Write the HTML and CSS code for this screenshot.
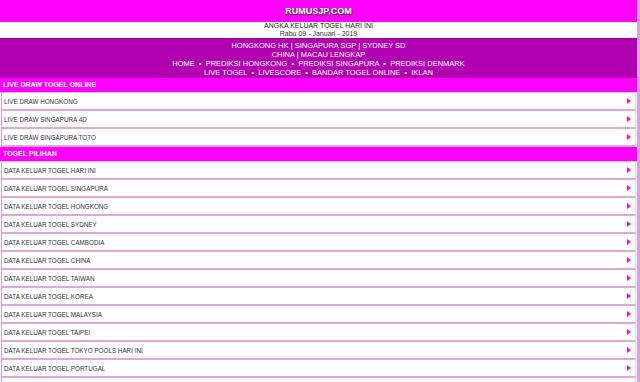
FILE: index.html
```html
<!DOCTYPE html>
<html>
<head>
<meta charset="utf-8">
<link rel="stylesheet" href="styles.css">
</head>
<body>
<div class="page">
  <header class="top">RUMUSJP.COM</header>
  <div class="sub">
    <div class="sub-title">ANGKA KELUAR TOGEL HARI INI</div>
    <div class="sub-date">Rabu 09 - Januari - 2019</div>
  </div>
  <nav class="nav">
    <div>HONGKONG HK | SINGAPURA SGP | SYDNEY SD</div>
    <div>CHINA | MACAU LENGKAP</div>
    <div>HOME &nbsp;•&nbsp; PREDIKSI HONGKONG &nbsp;•&nbsp; PREDIKSI SINGAPURA &nbsp;•&nbsp; PREDIKSI DENMARK</div>
    <div>LIVE TOGEL &nbsp;•&nbsp; LIVESCORE &nbsp;•&nbsp; BANDAR TOGEL ONLINE &nbsp;•&nbsp; IKLAN</div>
  </nav>
  <div class="sec">LIVE DRAW TOGEL ONLINE</div>
  <ul class="list">
    <li class="row">LIVE DRAW HONGKONG<span class="arr"></span></li>
    <li class="row">LIVE DRAW SINGAPURA 4D<span class="arr"></span></li>
    <li class="row">LIVE DRAW SINGAPURA TOTO<span class="arr"></span></li>
  </ul>
  <div class="sec">TOGEL PILIHAN</div>
  <ul class="list">
    <li class="row">DATA KELUAR TOGEL HARI INI<span class="arr"></span></li>
    <li class="row">DATA KELUAR TOGEL SINGAPURA<span class="arr"></span></li>
    <li class="row">DATA KELUAR TOGEL HONGKONG<span class="arr"></span></li>
    <li class="row">DATA KELUAR TOGEL SYDNEY<span class="arr"></span></li>
    <li class="row">DATA KELUAR TOGEL CAMBODIA<span class="arr"></span></li>
    <li class="row">DATA KELUAR TOGEL CHINA<span class="arr"></span></li>
    <li class="row">DATA KELUAR TOGEL TAIWAN<span class="arr"></span></li>
    <li class="row">DATA KELUAR TOGEL KOREA<span class="arr"></span></li>
    <li class="row">DATA KELUAR TOGEL MALAYSIA<span class="arr"></span></li>
    <li class="row">DATA KELUAR TOGEL TAIPEI<span class="arr"></span></li>
    <li class="row">DATA KELUAR TOGEL TOKYO POOLS HARI INI<span class="arr"></span></li>
    <li class="row">DATA KELUAR TOGEL PORTUGAL<span class="arr"></span></li>
    <li class="row"></li>
  </ul>
</div>
</body>
</html>
```
FILE: styles.css
```css
html, body {
  margin: 0;
  padding: 0;
  background: #dda0dd;
  overflow: hidden;
  height: 382px;
}
.page {
  width: 637px;
  background: #ffffff;
  font-family: "Liberation Sans", Arial, sans-serif;
}
.top {
  height: 22px;
  background: #ff00ff;
  color: #fff;
  font-weight: bold;
  font-size: 9px;
  line-height: 22px;
  text-align: center;
  text-shadow: 1px 1px 1px #333, 0 0 1px #333;
}
.sub {
  height: 16px;
  background: #fff;
  text-align: center;
  color: #222;
  font-size: 7px;
  line-height: 8px;
}
.sub-date {
  color: #333;
}
.nav {
  background: #b000b0;
  color: #fff;
  text-align: center;
  font-size: 7.5px;
  line-height: 9px;
  padding: 2px 0 1px;
  border-top: 1px solid #9a009a;
}
.sec {
  background: #ff00ff;
  color: #fff;
  font-weight: bold;
  font-size: 7px;
  height: 14px;
  line-height: 14px;
  padding-left: 3px;
  border-bottom: 1px solid #f0c0f0;
}
.list {
  list-style: none;
  margin: 0;
  padding: 0;
}
.row {
  display: flex;
  align-items: center;
  justify-content: space-between;
  height: 16px;
  margin-left: 1px;
  margin-right: 1px;
  padding: 0 4px 0 2px;
  background: #fff;
  border-left: 1px solid #d89ad8;
  border-right: 1px solid #efd3ef;
  border-bottom: 2px solid #e0a6e0;
  color: #333;
  font-size: 6.3px;
}
.arr {
  width: 0;
  height: 0;
  border-top: 3px solid transparent;
  border-bottom: 3px solid transparent;
  border-left: 4px solid #ff00ff;
}
```
